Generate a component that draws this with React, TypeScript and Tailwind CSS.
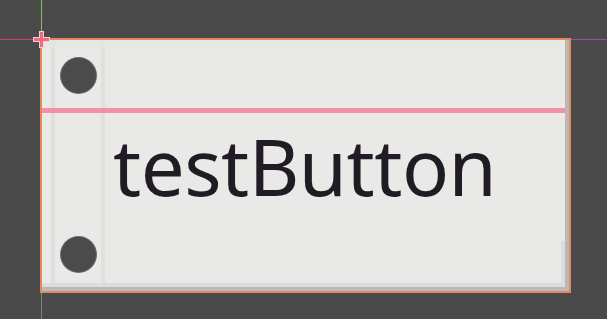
export default function App() {
  return (
    <div className="relative w-[607px] h-[319px] overflow-hidden bg-[#4a4a4a] pt-[38px] pl-[40px]">
      {/* editor guides */}
      <div className="absolute left-[41px] top-0 w-px h-[40px] bg-[#8cc152]" />
      <div className="absolute left-[41px] top-[292px] w-px h-[27px] bg-[#6f8d72]" />
      <div className="absolute left-0 top-[39px] w-[41px] h-px bg-[#d0406a]" />
      <div className="absolute left-[571px] top-[39px] w-[36px] h-px bg-[#a24aa8]" />

      <div className="relative w-[531px] h-[255px] border-2 border-[#e5875c] bg-[#e9e9e7] flex flex-col">
        <div className="flex h-[247px]">
          <div className="w-[9px]" />
          <div className="w-[4px] bg-[#dfdfdd]" />
          <div className="w-[46px] flex flex-col items-center pt-[18px]">
            <div className="w-[35px] h-[35px] rounded-full bg-[#4b4b4b] ring-1 ring-[#6a6a6a]" />
            <div className="mt-[144px] w-[35px] h-[35px] rounded-full bg-[#4b4b4b] ring-1 ring-[#6a6a6a]" />
          </div>
          <div className="w-[4px] bg-[#dfdfdd]" />
          <div className="flex-1 pl-[8px]">
            <div
              className="mt-[87px] text-[78px] leading-none text-[#211b24] tracking-[-0.5px]"
              style={{ fontFamily: '"Noto Sans", sans-serif' }}
            >
              testButton
            </div>
          </div>
          <div className="w-[4px] bg-[#b9b9b9]" />
        </div>
        <div className="h-[4px] bg-[#b9b9b9]" />

        {/* overlays */}
        <div className="absolute left-0 top-0 w-[519px] h-[8px] bg-[#e5e5e4]/70" />
        <div className="absolute left-0 top-[243px] w-[519px] h-[4px] bg-[#dcdcdc]" />
        <div className="absolute left-[519px] top-[201px] w-[4px] h-[46px] bg-[#dcdcdc]" />
        <div className="absolute left-0 top-[68px] w-[523px] h-[5px] bg-[#f58fa8]" />
      </div>

      {/* pivot cross */}
      <svg className="absolute left-[33px] top-[31px]" width="17" height="17" viewBox="0 0 17 17">
        <path d="M6 0h5v6h6v5h-6v6H6v-6H0V6h6z" fill="#f4d0d4" />
        <path d="M7 1h3v6h6v3h-6v6H7v-6H1V7h6z" fill="#ee6a80" />
      </svg>
    </div>
  );
}
